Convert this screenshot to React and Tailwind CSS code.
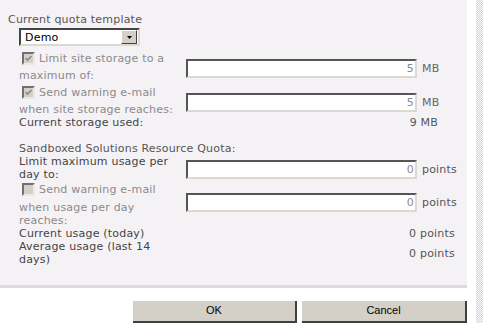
import React from "react";

// disabled / checked classic checkbox
const Box = ({ checked }) => (
  <span className="flex h-[13px] w-[13px] shrink-0 items-center justify-center border-2 border-t-[#6f6f6f] border-l-[#6f6f6f] border-r-[#ebe9e4] border-b-[#ebe9e4] bg-[#d4d0c8]">
    {checked && (
      <svg width="7" height="7" viewBox="0 0 7 7">
        <path d="M0.5 3 L2.5 5 L6.5 1" fill="none" stroke="#8c8c8c" strokeWidth="1.6" />
      </svg>
    )}
  </span>
);

const Field = ({ value }) => (
  <div className="h-[19px] w-[231px] border-2 border-t-[#555] border-l-[#555] border-r-[#dcd9d3] border-b-[#dcd9d3] bg-white pr-[1px] text-right leading-[15px] text-[#8a8a8a]">
    {value}
  </div>
);

const Select = () => (
  <div className="ml-[19px] mt-[2px] flex h-[18px] w-[121px] items-center justify-between border-2 border-t-[#444] border-l-[#444] border-r-[#dcd9d3] border-b-[#dcd9d3] bg-white pl-[4px] pr-[1px] text-black">
    <span>Demo</span>
    <span className="flex h-[14px] w-[16px] items-center justify-center border border-t-white border-l-white border-r-[#404040] border-b-[#404040] bg-[#d4d0c8]">
      <svg width="5" height="3" viewBox="0 0 5 3">
        <path d="M0 0 H5 L2.5 3 Z" fill="#000" />
      </svg>
    </span>
  </div>
);

const App = () => {
  return (
    <div className="flex h-[323px] w-[483px] overflow-hidden bg-white font-['DejaVu_Sans',sans-serif] text-[11px] leading-[13px] tracking-[0.2px]">
      <div className="flex w-[467px] flex-col">
        {/* quota panel */}
        <div className="h-[287px] bg-[#f5f2f5] pt-[13px]">
          <div className="pl-[8px] text-[#555]">Current quota template</div>
          <Select />

          <div className="ml-[19px] mt-[6px] whitespace-nowrap">
            {/* storage limit */}
            <div className="flex">
              <div className="w-[167px] text-[#8a8a8a]">
                <div className="flex items-center gap-[4px] pl-[3px]">
                  <Box checked />
                  Limit site storage to a
                </div>
                <div className="mt-[4px]">maximum of:</div>
              </div>
              <div className="mt-[3px] flex items-center gap-[5px]">
                <Field value="5" />
                <span className="text-[#666]">MB</span>
              </div>
            </div>

            {/* storage warning */}
            <div className="mt-[4px] flex">
              <div className="w-[167px] text-[#8a8a8a]">
                <div className="flex items-center gap-[4px] pl-[3px]">
                  <Box checked />
                  Send warning e-mail
                </div>
                <div className="mt-[4px]">when site storage reaches:</div>
              </div>
              <div className="mt-[2px] flex items-center gap-[5px]">
                <Field value="5" />
                <span className="text-[#666]">MB</span>
              </div>
            </div>

            <div className="flex text-[#444]">
              <div className="w-[167px]">Current storage used:</div>
              <div className="w-[252px] text-right text-[#555]">9 MB</div>
            </div>

            {/* sandboxed solutions */}
            <div className="mt-[13px] text-[#555]">Sandboxed Solutions Resource Quota:</div>

            <div className="flex">
              <div className="w-[167px] text-[#444]">
                <div>Limit maximum usage per</div>
                <div>day to:</div>
              </div>
              <div className="mt-[2px] flex items-center gap-[5px]">
                <Field value="0" />
                <span className="text-[#555]">points</span>
              </div>
            </div>

            <div className="mt-[2px] flex">
              <div className="w-[167px] text-[#8a8a8a]">
                <div className="flex items-center gap-[4px] pl-[3px]">
                  <Box />
                  Send warning e-mail
                </div>
                <div className="mt-[5px]">when usage per day</div>
                <div>reaches:</div>
              </div>
              <div className="mt-[10px] flex items-center gap-[5px] self-start">
                <Field value="0" />
                <span className="text-[#555]">points</span>
              </div>
            </div>

            <div className="flex text-[#444]">
              <div className="w-[167px]">Current usage (today)</div>
              <div className="w-[269px] text-right text-[#555]">0 points</div>
            </div>
            <div className="flex items-center text-[#444]">
              <div className="w-[167px]">
                <div>Average usage (last 14</div>
                <div>days)</div>
              </div>
              <div className="w-[269px] text-right text-[#555]">0 points</div>
            </div>
          </div>
        </div>

        <div className="h-[3px] bg-[#dcdcdc]" />

        {/* dialog buttons */}
        <div className="mt-[13px] flex justify-end gap-[5px] font-['Liberation_Sans',sans-serif] text-[11px] tracking-normal text-black">
          <button className="h-[22px] w-[164px] border-r-2 border-b-2 border-r-[#404040] border-b-[#404040] bg-[#d4d0c8] pb-[2px]">
            OK
          </button>
          <button className="h-[22px] w-[165px] border-r-2 border-b-2 border-r-[#404040] border-b-[#404040] bg-[#d4d0c8] pb-[2px]">
            Cancel
          </button>
        </div>
      </div>

      <div className="w-[9px]" />
      <div className="w-[7px] bg-[image:repeating-conic-gradient(#cfcfcf_0%_25%,#ffffff_0%_50%)] bg-[length:2px_2px]" />
    </div>
  );
};

export default App;
